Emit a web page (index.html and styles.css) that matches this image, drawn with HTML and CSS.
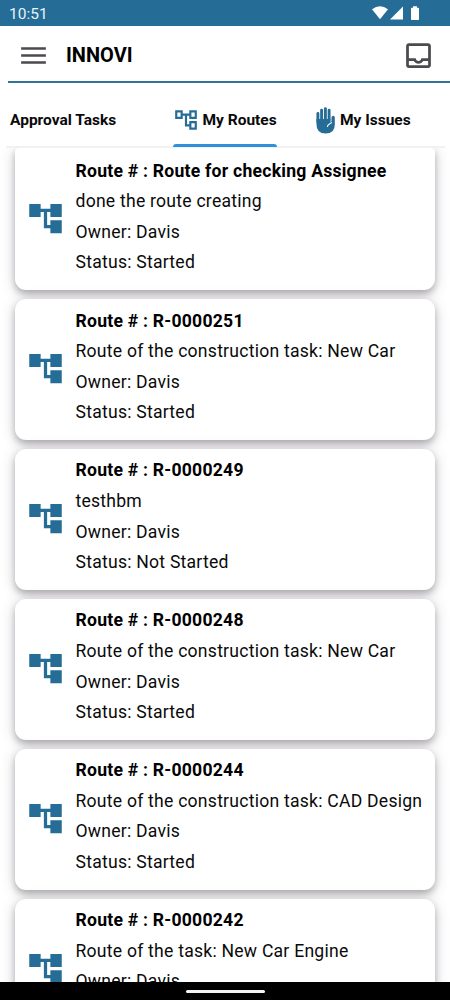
FILE: index.html
```
<!DOCTYPE html>
<html lang="en">
<head>
<meta charset="utf-8">
<title>INNOVI</title>
<link rel="stylesheet" href="styles.css">
</head>
<body>
<svg class="defs" width="0" height="0">
  <symbol id="tree" viewBox="0 0 24 24"><path d="M22 11V3h-7v3H9V3H2v8h7V8h2v10h4v3h7v-8h-7v3h-2V8h2v3z"/></symbol>
</svg>
<div class="screen">
  <div class="status">
    <span class="time">10:51</span>
    <svg class="signals" width="50" height="16" viewBox="0 0 50 16">
      <path d="M0 3.3Q8 -2.8 16 3.3L8 13.2z"/>
      <path d="M18 13.6L31 .6v13z"/>
      <path d="M41 .2h4v1.5h1.2q.8 0 .8.8v10.7q0 .8-.8.8h-6.4q-.8 0-.8-.8V2.500q0-.8.8-.8h1.200z"/>
    </svg>
  </div>
  <header class="appbar">
    <svg class="menu" viewBox="0 0 24 24"><path d="M3 18h18v-1.800H3zM3 12.900h18v-1.800H3zM3 6v1.800h18V6z"/></svg>
    <h1 class="brand">INNOVI</h1>
    <svg class="inbox" viewBox="0 0 24 24"><path d="M19 3H5c-1.100 0-2 .9-2 2v14c0 1.100.9 2 2 2h14c1.100 0 2-.9 2-2V5c0-1.100-.9-2-2-2zm0 16H5v-3h3.560c.690 1.190 1.970 2 3.450 2s2.750-.81 3.450-2H19v3zm0-5h-4.990c0 1.100-.9 2-2 2s-2-.9-2-2H5V5h14v9z"/></svg>
  </header>
  <nav class="tabs">
    <div class="tab tab-approval"><span>Approval Tasks</span></div>
    <div class="tab tab-routes">
      <svg class="tab-tree" viewBox="0 0 24 24"><path d="M22 11V3h-7v3H9V3H2v8h7V8h2v10h4v3h7v-8h-7v3h-2V8h2v3h7zM7 9H4V5h3v4zm10 6h3v4h-3v-4zm0-10h3v4h-3V5z"/></svg>
      <span>My Routes</span>
    </div>
    <div class="tab tab-issues">
      <svg class="hand" viewBox="0 0 19 27">
        <path class="fingers" d="M1.900 15V6.500M5.600 13V3.100M9.400 13V1.600M13.100 13V3.200"/>
        <path d="M.5 12H14.500V15.500L15.500 14V10.300Q15.700 8.700 17.200 8.700Q18.800 8.900 18.800 10.500V17.500Q18.800 26.600 9.600 26.600Q.5 26.600.5 17.500z"/>
        <path class="crease" d="M15.700 15.200Q15 16.500 13.400 17.100Q11.600 17.800 11.400 20"/>
      </svg>
      <span>My Issues</span>
    </div>
  </nav>
  <main class="list">
    <article class="card card-first">
      <svg class="route"><use href="#tree"/></svg>
      <div class="info"><b>Route # : Route for checking Assignee</b><span>done the route creating</span><span>Owner: Davis</span><span>Status: Started</span></div>
    </article>
    <article class="card">
      <svg class="route"><use href="#tree"/></svg>
      <div class="info"><b>Route # : R-0000251</b><span>Route of the construction task: New Car</span><span>Owner: Davis</span><span>Status: Started</span></div>
    </article>
    <article class="card">
      <svg class="route"><use href="#tree"/></svg>
      <div class="info"><b>Route # : R-0000249</b><span>testhbm</span><span>Owner: Davis</span><span>Status: Not Started</span></div>
    </article>
    <article class="card">
      <svg class="route"><use href="#tree"/></svg>
      <div class="info"><b>Route # : R-0000248</b><span>Route of the construction task: New Car</span><span>Owner: Davis</span><span>Status: Started</span></div>
    </article>
    <article class="card">
      <svg class="route"><use href="#tree"/></svg>
      <div class="info"><b>Route # : R-0000244</b><span>Route of the construction task: CAD Design</span><span>Owner: Davis</span><span>Status: Started</span></div>
    </article>
    <article class="card">
      <svg class="route"><use href="#tree"/></svg>
      <div class="info"><b>Route # : R-0000242</b><span>Route of the task: New Car Engine</span><span>Owner: Davis</span><span>Status: Started</span></div>
    </article>
  </main>
  <footer class="navbar"><div class="handle"></div></footer>
</div>
</body>
</html>
```
FILE: styles.css
```
* { box-sizing: border-box; }
body { margin: 0; background: #fff; font-family: Roboto, sans-serif; color: #0a0a0a; }
.defs { display: block; }
.screen { width: 450px; height: 1000px; display: flex; flex-direction: column; overflow: hidden; background: #fff; }
.status { flex: none; height: 26px; background: #256c96; display: flex; align-items: center; justify-content: space-between; padding: 2px 30px 0 9px; }
.time { font-size: 15.500px; line-height: 24px; color: #e8f3fa; }
.signals { fill: #fff; margin-right: -2px; }
.appbar { flex: none; height: 57px; margin-left: 8px; padding: 3px 15px 0 9px; border-bottom: 2px solid #33739b; display: flex; align-items: center; }
.menu, .inbox { width: 33px; height: 33px; fill: #4c4a4e; flex: none; }
.brand { margin: 0 auto 0 16px; font-size: 20px; line-height: 30px; font-weight: 700; color: #000; }
.tabs { flex: none; height: 65px; margin: 0 5px 0 6px; border-bottom: 2px solid #f1f0f2; display: flex; font-size: 15.500px; font-weight: 700; }
.tab { height: 65px; display: flex; align-items: center; padding-top: 9px; white-space: nowrap; }
.tab-approval { width: 167px; padding-left: 4px; }
.tab-routes { position: relative; width: 104px; }
.tab-routes::after { content: ""; position: absolute; left: 0; right: 0; bottom: 1px; height: 3px; border-radius: 3px 3px 0 0; background: #3090dc; }
.tab-tree { width: 26px; height: 26px; margin: 0 3.500px 0 0; fill: #256c96; flex: none; }
.tab-issues { margin-left: 39px; }
.hand { width: 19px; height: 27px; margin-right: 5px; fill: #256c96; flex: none; }
.fingers { stroke: #256c96; stroke-width: 2.900; stroke-linecap: round; fill: none; }
.crease { stroke: #fff; stroke-width: 1.100; fill: none; }
.list { flex: 1; min-height: 0; overflow: hidden; padding: 0 15px; display: flex; flex-direction: column; gap: 8.900px; }
.card { flex: none; height: 141px; border-radius: 11px; background: #fff; padding: 6.500px 0 0 11px; display: flex; box-shadow: 0 4px 7px rgba(0, 0, 0, .25), 0 2px 15px rgba(70, 50, 75, .2); }
.card-first { height: 142.200px; padding-top: 7.700px; border-radius: 4px 4px 11px 11px; }
.route { width: 39px; height: 39px; margin: 43.500px 10.500px 0 0; fill: #256c96; flex: none; }
.info { display: flex; flex-direction: column; font-size: 17.600px; line-height: 30.600px; letter-spacing: .23px; white-space: nowrap; }
.info b { font-weight: 700; color: #000; }
.navbar { flex: none; height: 18px; background: #000; display: flex; justify-content: center; padding-top: 8px; position: relative; }
.handle { width: 79px; height: 3px; border-radius: 2px; background: #f4f4f4; }
```
